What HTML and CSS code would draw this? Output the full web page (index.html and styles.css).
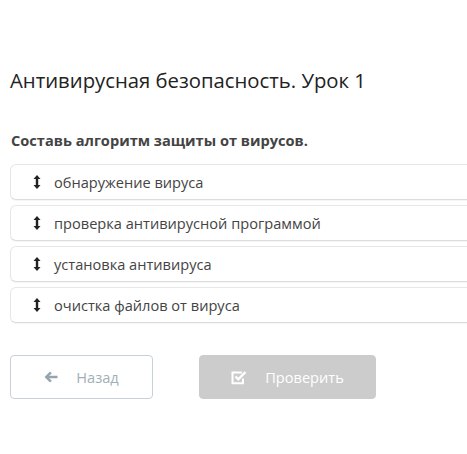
FILE: index.html
```html
<!DOCTYPE html>
<html lang="ru">
<head>
<meta charset="utf-8">
<link rel="stylesheet" href="styles.css">
</head>
<body>
<div class="page">
  <h1 class="title">Антивирусная безопасность. Урок 1</h1>
  <p class="question">Составь алгоритм защиты от вирусов.</p>
  <ul class="list">
    <li class="item"><svg class="drag" viewBox="0 0 8 14" width="8" height="14"><path d="M4 0 L7.5 4 H5.2 V10 H7.5 L4 14 L0.5 10 H2.8 V4 H0.5 Z" fill="#222"/></svg><span>обнаружение вируса</span></li>
    <li class="item"><svg class="drag" viewBox="0 0 8 14" width="8" height="14"><path d="M4 0 L7.5 4 H5.2 V10 H7.5 L4 14 L0.5 10 H2.8 V4 H0.5 Z" fill="#222"/></svg><span>проверка антивирусной программой</span></li>
    <li class="item"><svg class="drag" viewBox="0 0 8 14" width="8" height="14"><path d="M4 0 L7.5 4 H5.2 V10 H7.5 L4 14 L0.5 10 H2.8 V4 H0.5 Z" fill="#222"/></svg><span>установка антивируса</span></li>
    <li class="item"><svg class="drag" viewBox="0 0 8 14" width="8" height="14"><path d="M4 0 L7.5 4 H5.2 V10 H7.5 L4 14 L0.5 10 H2.8 V4 H0.5 Z" fill="#222"/></svg><span>очистка файлов от вируса</span></li>
  </ul>
  <div class="actions">
    <button class="btn btn-back"><svg viewBox="0 0 14 12" width="14" height="12"><path d="M6 0.5 L7.8 2.3 L5.2 4.8 H13.5 V7.2 H5.2 L7.8 9.7 L6 11.5 L0.5 6 Z" fill="#95a5b0"/></svg><span>Назад</span></button>
    <button class="btn btn-check"><svg viewBox="0 0 16 15" width="16" height="15"><path d="M12 8.5 V13.2 H1.5 V2.5 H11" fill="none" stroke="#fff" stroke-width="2"/><path d="M4.5 6.5 L7.3 9.3 L14.5 2" fill="none" stroke="#fff" stroke-width="2.4"/></svg><span>Проверить</span></button>
  </div>
</div>
</body>
</html>
```
FILE: styles.css
```css
html, body {
  margin: 0;
  padding: 0;
  background: #fff;
  overflow: hidden;
}
body {
  font-family: "Open Sans", "Liberation Sans", sans-serif;
  color: #333;
}
.page {
  padding: 66px 0 0 10px;
  width: 457px;
  overflow: hidden;
}
.title {
  margin: 0;
  font-size: 20.3px;
  font-weight: 400;
  line-height: 28px;
  color: #222;
}
.question {
  margin: 36px 0 0 1px;
  font-size: 14.6px;
  font-weight: 700;
  line-height: 20px;
  color: #444;
}
.list {
  list-style: none;
  margin: 14px -40px 0 0;
  padding: 0;
  display: flex;
  flex-direction: column;
  gap: 5px;
}
.item {
  height: 34px;
  border: 1px solid #e6e6e6;
  border-bottom-color: #dcdcdc;
  border-radius: 6px;
  box-shadow: 0 1px 1px rgba(0,0,0,0.04);
  display: flex;
  align-items: center;
  padding-left: 22px;
  font-size: 14.6px;
  color: #444;
}
.drag {
  margin-right: 13px;
  flex: none;
}
.actions {
  display: flex;
  gap: 46px;
  margin-top: 32px;
}
.btn {
  height: 44px;
  border-radius: 4px;
  font-family: "Open Sans", "Liberation Sans", sans-serif;
  font-size: 14.6px;
  display: flex;
  align-items: center;
  justify-content: center;
  gap: 18px;
  padding: 0;
}
.btn-back {
  width: 143px;
  background: #fff;
  border: 1px solid #c9d1d8;
  color: #a2afb8;
}
.btn-check {
  width: 177px;
  background: #cccccc;
  border: 1px solid #cccccc;
  color: #fff;
}
```
